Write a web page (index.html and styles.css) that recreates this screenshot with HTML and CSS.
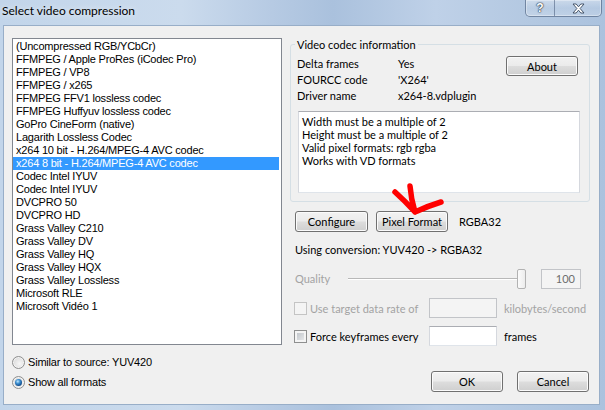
FILE: index.html
```html
<!DOCTYPE html>
<html>
<head>
  <link rel="stylesheet" href="styles.css">
</head>
<body>
  <div class="window">
    <div class="titlebar">
      <div class="title">Select video compression</div>
      <div class="caption-buttons">
        <div class="cap-btn help">?</div>
        <div class="cap-btn close">
          <svg width="13" height="11" viewBox="0 0 13 11">
            <path d="M1 1h3.2l2.3 2.8L8.8 1H12L8.1 5.5 12 10H8.8L6.5 7.2 4.2 10H1l3.9-4.5z" fill="#fff" stroke="#38485e" stroke-width="0.9" stroke-linejoin="round"/>
          </svg>
        </div>
      </div>
    </div>

    <div class="client">
      <div class="left-col">
        <div class="listbox">
          <div class="item">(Uncompressed RGB/YCbCr)</div>
          <div class="item">FFMPEG / Apple ProRes (iCodec Pro)</div>
          <div class="item">FFMPEG / VP8</div>
          <div class="item">FFMPEG / x265</div>
          <div class="item">FFMPEG FFV1 lossless codec</div>
          <div class="item">FFMPEG Huffyuv lossless codec</div>
          <div class="item">GoPro CineForm (native)</div>
          <div class="item">Lagarith Lossless Codec</div>
          <div class="item">x264 10 bit - H.264/MPEG-4 AVC codec</div>
          <div class="item selected">x264 8 bit - H.264/MPEG-4 AVC codec</div>
          <div class="item">Codec Intel IYUV</div>
          <div class="item">Codec Intel IYUV</div>
          <div class="item">DVCPRO 50</div>
          <div class="item">DVCPRO HD</div>
          <div class="item">Grass Valley C210</div>
          <div class="item">Grass Valley DV</div>
          <div class="item">Grass Valley HQ</div>
          <div class="item">Grass Valley HQX</div>
          <div class="item">Grass Valley Lossless</div>
          <div class="item">Microsoft RLE</div>
          <div class="item">Microsoft Vidéo 1</div>
        </div>
        <div class="radio-row first">
          <span class="radio"></span>
          <span>Similar to source: YUV420</span>
        </div>
        <div class="radio-row">
          <span class="radio checked"></span>
          <span>Show all formats</span>
        </div>
      </div>

      <div class="right-col">
        <div class="group">
          <div class="group-title">Video codec information</div>
          <div class="info">
            <div class="info-grid">
              <span>Delta frames</span><span>Yes</span>
              <span>FOURCC code</span><span>'X264'</span>
              <span>Driver name</span><span>x264-8.vdplugin</span>
            </div>
            <div class="btn about">About</div>
          </div>
          <div class="notes">
            Width must be a multiple of 2<br>
            Height must be a multiple of 2<br>
            Valid pixel formats: rgb rgba<br>
            Works with VD formats
          </div>
        </div>

        <div class="format-row">
          <div class="btn configure">Configure</div>
          <div class="btn pixel">Pixel Format</div>
          <span class="format-name">RGBA32</span>
        </div>

        <div class="conversion">Using conversion: YUV420 -&gt; RGBA32</div>

        <div class="quality-row">
          <span class="quality-label">Quality</span>
          <div class="slider">
            <div class="track"></div>
            <div class="thumb"></div>
          </div>
          <div class="textbox disabled quality-value">100</div>
        </div>

        <div class="check-row disabled">
          <div class="check-label"><span class="checkbox"></span>Use target data rate of</div>
          <div class="textbox disabled field"></div>
          <span class="unit">kilobytes/second</span>
        </div>

        <div class="check-row second">
          <div class="check-label"><span class="checkbox"></span>Force keyframes every</div>
          <div class="textbox field"></div>
          <span class="unit">frames</span>
        </div>

        <div class="dialog-buttons">
          <div class="btn">OK</div>
          <div class="btn">Cancel</div>
        </div>
      </div>
    </div>

    <!-- red marker someone drew over the screenshot -->
    <svg class="scribble" width="605" height="410" viewBox="0 0 605 410">
      <path d="M395 192 Q405 201 415 212 M410 186 Q411 199 415 212 Q428 206 441 202" fill="none" stroke="#f00" stroke-width="5.5" stroke-linecap="round" stroke-linejoin="round"/>
    </svg>
  </div>
</body>
</html>
```

FILE: styles.css
```css
body {
  margin: 0;
  font-family: Lato, "Liberation Sans", sans-serif;
  font-size: 11px;
  color: #000;
}

.window {
  position: relative;
  width: 605px;
  height: 410px;
  display: flex;
  flex-direction: column;
  overflow: hidden;
  background: linear-gradient(90deg, #c2d5ea 0%, #cbdbed 30%, #b6cae3 45%, #aac1dd 55%, #bfd1e8 72%, #b3c8e1 88%, #abc2de 100%);
}

/* Title bar */
.titlebar {
  height: 25px;
  display: flex;
  align-items: flex-start;
}

.title {
  padding: 4px 0 0 2px;
  font-size: 12px;
  line-height: 14px;
  text-shadow: 0 0 6px rgba(255,255,255,0.8);
}

.caption-buttons {
  display: flex;
  margin-left: auto;
  margin-right: 3px;
  height: 16px;
  border: 1px solid rgba(70,90,120,0.6);
  border-top: none;
  border-radius: 0 0 5px 5px;
  overflow: hidden;
  box-shadow: inset 0 0 0 1px rgba(255,255,255,0.35);
}

.cap-btn {
  display: flex;
  align-items: center;
  justify-content: center;
  background: linear-gradient(rgba(255,255,255,0.35), rgba(255,255,255,0.1) 50%, rgba(255,255,255,0.2));
}

.cap-btn.help {
  width: 28px;
  border-right: 1px solid rgba(70,90,120,0.55);
  color: #fff;
  font-family: "Liberation Sans", sans-serif;
  font-weight: bold;
  font-size: 12px;
  text-shadow: 0 0 1px #2c3a4e, 0 0 1px #2c3a4e, 0 0 2px #2c3a4e;
}

.cap-btn.close {
  width: 46px;
}

/* Client area */
.client {
  box-sizing: border-box;
  height: 380px;
  margin: 0 5px 5px 3px;
  border: 1px solid #98aec8;
  background: #f0f0f0;
  display: flex;
  padding: 12px 0 0 8px;
}

.left-col {
  width: 270px;
  font-family: "Liberation Sans", sans-serif;
  font-size: 11px;
  letter-spacing: -0.2px;
}

.listbox {
  box-sizing: border-box;
  height: 307px;
  border: 1px solid #828790;
  background: #fff;
  padding: 1px 2px 0 0;
}

.item {
  height: 13px;
  line-height: 13px;
  padding-left: 3px;
  white-space: nowrap;
}

.item.selected {
  background: #3399ff;
  color: #fff;
}

.radio-row {
  display: flex;
  align-items: center;
  height: 14px;
  margin-top: 6px;
}

.radio-row.first {
  margin-top: 10px;
}

.radio {
  box-sizing: border-box;
  width: 13px;
  height: 13px;
  margin-right: 3px;
  border: 1px solid #8e8f8f;
  border-radius: 50%;
  background: radial-gradient(circle at 60% 60%, #f7f7f7, #d8d8d8 80%);
  box-shadow: inset 0 0 0 1px #f4f4f4;
  display: inline-flex;
  align-items: center;
  justify-content: center;
}

.radio.checked:after {
  content: '';
  width: 7px;
  height: 7px;
  border-radius: 50%;
  background: radial-gradient(circle at 40% 35%, #bfe8ff 0%, #3d8fd0 35%, #134f8f 70%, #0c3567 100%);
}

/* Right column */
.right-col {
  width: 300px;
  margin-left: 8px;
}

.group {
  margin-top: 6px;
  border: 1px solid #d5dfe5;
  border-radius: 3px;
  padding: 0 9px 8px 6px;
}

.group-title {
  width: fit-content;
  margin: -7px 0 0 -2px;
  padding: 0 2px;
  line-height: 13px;
  background: #f0f0f0;
}

.info {
  display: flex;
  justify-content: space-between;
  align-items: flex-start;
  margin-top: 5px;
}

.info-grid {
  display: grid;
  grid-template-columns: 101px auto;
  line-height: 16px;
}

.btn {
  box-sizing: border-box;
  width: 72px;
  height: 21px;
  border: 1px solid #707070;
  border-radius: 3px;
  background: linear-gradient(#f2f2f2 0%, #ebebeb 48%, #dddddd 52%, #cfcfcf 100%);
  box-shadow: inset 0 0 0 1px #fbfbfb;
  display: flex;
  align-items: center;
  justify-content: center;
}

.btn.about {
  height: 20px;
  margin-right: 2px;
}

.notes {
  box-sizing: border-box;
  height: 82px;
  margin: 7px 0 0 1px;
  padding: 3px 3px;
  line-height: 13px;
  background: #fff;
  border: 1px solid #abadb3;
  border-color: #abadb3 #d5d8de #dfe4ea #d5d8de;
}

.format-row {
  display: flex;
  align-items: center;
  margin-top: 9px;
  padding-left: 5px;
}

.btn.configure {
  width: 73px;
}

.btn.pixel {
  margin-left: 8px;
}

.format-name {
  margin-left: 11px;
}

.conversion {
  margin-top: 11px;
  padding-left: 5px;
  line-height: 14px;
}

.quality-row {
  display: flex;
  align-items: center;
  height: 21px;
  margin-top: 11px;
  padding-left: 5px;
}

.quality-label {
  width: 53px;
  color: #a3a3a3;
}

.slider {
  width: 179px;
  height: 21px;
  display: flex;
  align-items: center;
}

.track {
  width: 169px;
  height: 1px;
  background: #b8b8b8;
  border-bottom: 1px solid #fff;
}

.thumb {
  box-sizing: border-box;
  width: 9px;
  height: 20px;
  border: 1px solid #b2b2b2;
  border-radius: 2px;
  background: linear-gradient(90deg, #fbfbfb, #ececec);
}

.textbox {
  box-sizing: border-box;
  height: 20px;
  background: #fff;
  border: 1px solid #abadb3;
  border-color: #abadb3 #d5d8de #dfe4ea #d5d8de;
}

.textbox.disabled {
  background: #f4f4f4;
  border-color: #c2c4c8;
}

.quality-value {
  width: 40px;
  margin-left: 14px;
  text-align: right;
  padding-right: 5px;
  line-height: 18px;
  color: #6d6d6d;
}

.check-row {
  display: flex;
  align-items: center;
  height: 20px;
  margin-top: 9px;
}

.check-row.second {
  margin-top: 8px;
}

.check-label {
  width: 139px;
  display: flex;
  align-items: center;
  padding-left: 4px;
  box-sizing: border-box;
  white-space: nowrap;
}

.checkbox {
  box-sizing: border-box;
  width: 13px;
  height: 13px;
  margin-right: 3px;
  border: 1px solid #8e8f8f;
  background: linear-gradient(135deg, #b9bec4, #eeeff0);
  box-shadow: inset 0 0 0 2px #f4f4f4;
}

.check-row.disabled .check-label,
.check-row.disabled .unit {
  color: #a3a3a3;
}

.check-row.disabled .checkbox {
  border-color: #c4c4c4;
  background: #f4f4f4;
}

.field {
  width: 68px;
}

.unit {
  margin-left: 7px;
  white-space: nowrap;
}

.dialog-buttons {
  display: flex;
  justify-content: flex-end;
  gap: 14px;
  margin-top: 25px;
  padding-right: 1px;
}

.scribble {
  position: absolute;
  left: 0;
  top: 0;
  pointer-events: none;
}
```
